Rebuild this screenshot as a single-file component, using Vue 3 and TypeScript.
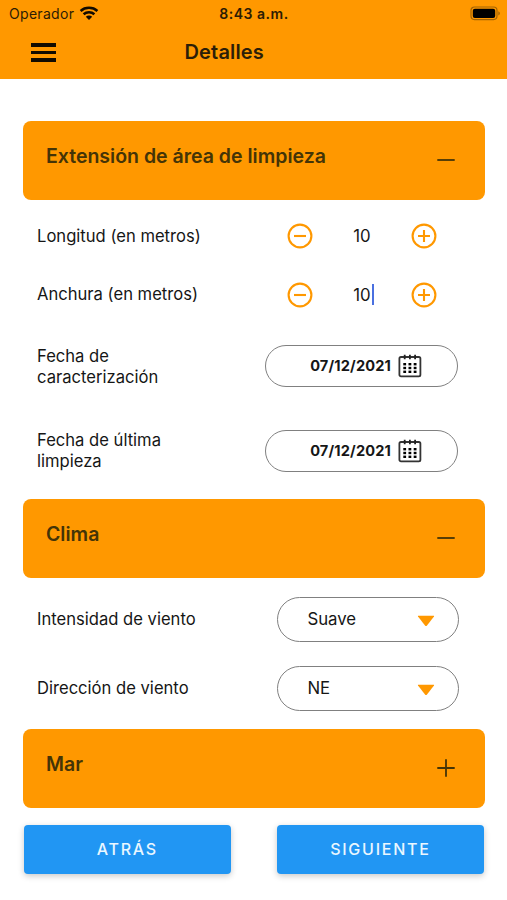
<script setup lang="ts">
import { ref } from 'vue'

interface Measure {
  label: string
  value: number
  focused: boolean
}

const measures = ref<Measure[]>([
  { label: 'Longitud (en metros)', value: 10, focused: false },
  { label: 'Anchura (en metros)', value: 10, focused: true },
])
const dates = [
  { label: 'Fecha de caracterización', value: '07/12/2021' },
  { label: 'Fecha de última limpieza', value: '07/12/2021' },
]
const winds = [
  { label: 'Intensidad de viento', value: 'Suave' },
  { label: 'Dirección de viento', value: 'NE' },
]
const dotColumns = [6.7, 11.9, 17.1]
const dotRows = [10.2, 14, 17.8]
</script>

<template>
  <div class="screen">
    <header class="top">
      <div class="status">
        <div class="carrier">
          <span class="operator">Operador</span>
          <svg class="wifi" width="20" height="15" viewBox="0 0 20 15">
            <path d="M1.6 5C6.2 0.8 13.8 0.8 18.4 5" />
            <path d="M4.6 8.3C7.7 5.5 12.3 5.5 15.4 8.3" />
            <path class="solid" d="M10 14 L6.8 10.7 C8.6 9.1 11.4 9.1 13.2 10.7 Z" />
          </svg>
        </div>
        <span class="clock">8:43 a.m.</span>
        <svg class="battery" width="31" height="15" viewBox="0 0 31 15">
          <rect class="shell" x="1" y="1" width="26" height="12.6" rx="3.5" />
          <rect x="2.8" y="2.7" width="22.4" height="9.2" rx="2" />
          <path class="cap" d="M28.3 5.2 C30.4 6 30.4 8.6 28.3 9.4Z" />
        </svg>
      </div>
      <div class="navbar">
        <button class="menu" aria-label="Menú"><i></i><i></i><i></i></button>
        <h1>Detalles</h1>
      </div>
    </header>

    <main>
      <section>
        <div class="panel">
          <h2>Extensión de área de limpieza</h2>
          <svg class="toggle" width="18" height="18" viewBox="0 0 18 18"><path d="M0.3 9H17.7" /></svg>
        </div>
        <div class="fields extent">
          <div v-for="m in measures" :key="m.label" class="row measure">
            <span class="label">{{ m.label }}</span>
            <div class="stepper">
              <button @click="m.value--">
                <svg width="26" height="26" viewBox="0 0 26 26"><circle cx="13" cy="13" r="11.4" /><path d="M7 13H19" /></svg>
              </button>
              <span class="amount">{{ m.value }}<i v-if="m.focused" class="caret"></i></span>
              <button @click="m.value++">
                <svg width="26" height="26" viewBox="0 0 26 26"><circle cx="13" cy="13" r="11.4" /><path d="M7 13H19M13 7V19" /></svg>
              </button>
            </div>
          </div>
          <div v-for="d in dates" :key="d.label" class="row date">
            <span class="label narrow">{{ d.label }}</span>
            <div class="pill date-pill">
              <span>{{ d.value }}</span>
              <svg width="24" height="24" viewBox="0 0 24 24">
                <rect class="frame" x="1.4" y="3" width="21" height="19.4" rx="1.6" />
                <path class="rings" d="M6.7 0.8V5.2M11.9 0.8V5.2M17.1 0.8V5.2" />
                <template v-for="y in dotRows" :key="y">
                  <rect v-for="x in dotColumns" :key="x" :x="x - 1.4" :y="y - 1.2" width="2.8" height="2.4" />
                </template>
              </svg>
            </div>
          </div>
        </div>
      </section>

      <section>
        <div class="panel">
          <h2>Clima</h2>
          <svg class="toggle" width="18" height="18" viewBox="0 0 18 18"><path d="M0.3 9H17.7" /></svg>
        </div>
        <div class="fields climate">
          <div v-for="w in winds" :key="w.label" class="row wind">
            <span class="label">{{ w.label }}</span>
            <div class="pill select">
              <span>{{ w.value }}</span>
              <svg width="18" height="12" viewBox="0 0 18 12"><path d="M1.2 0.8H16.8Q17.4 0.8 17 1.4L10 10.6Q9 11.6 8 10.6L1 1.4Q0.6 0.8 1.2 0.8Z" /></svg>
            </div>
          </div>
        </div>
      </section>

      <section>
        <div class="panel">
          <h2>Mar</h2>
          <svg class="toggle" width="18" height="18" viewBox="0 0 18 18"><path d="M0.3 9H17.7M9 0.3V17.7" /></svg>
        </div>
      </section>

      <footer>
        <button class="action">ATRÁS</button>
        <button class="action">SIGUIENTE</button>
      </footer>
    </main>
  </div>
</template>

<style>
body {
  margin: 0;
  background: #fff;
}
</style>

<style scoped>
.screen {
  width: 507px;
  height: 900px;
  overflow: hidden;
  background: #fff;
  color: #161616;
  font-family: Inter, 'Liberation Sans', sans-serif;
}
button {
  padding: 0;
  border: 0;
  background: none;
  font-family: inherit;
}
.top {
  height: 79px;
  background: #ff9800;
}
.status {
  display: grid;
  grid-template-columns: 1fr auto 1fr;
  align-items: center;
  height: 27px;
  padding: 0 6px 0 9px;
}
.carrier {
  display: flex;
  align-items: center;
  gap: 5px;
  font-size: 14px;
  color: #2c1c04;
}
.operator {
  letter-spacing: 0.3px;
}
.wifi {
  margin-top: -1px;
  fill: none;
  stroke: #120b00;
  stroke-width: 2.5;
}
.wifi .solid {
  fill: #120b00;
  stroke: none;
}
.clock {
  margin-right: 2px;
  font-size: 14px;
  font-weight: 600;
  letter-spacing: 0.5px;
  color: #2c1c04;
}
.battery {
  justify-self: end;
}
.shell {
  fill: none;
  stroke: #a36404;
  stroke-width: 1.2;
}
.cap {
  fill: #a36404;
}
.navbar {
  display: grid;
  grid-template-columns: 153.5px 1fr;
  align-items: center;
  height: 50px;
  padding-left: 31px;
}
.menu {
  display: flex;
  flex-direction: column;
  gap: 4px;
  width: 25px;
  margin-top: 1px;
}
.menu i {
  height: 3.6px;
  background: #120b00;
}
h1 {
  margin: 0;
  font-size: 20px;
  font-weight: 600;
  letter-spacing: 0.15px;
  color: #2c1e08;
}
main {
  padding: 42px 22px 0 23px;
}
.panel {
  display: flex;
  justify-content: space-between;
  height: 78.5px;
  padding: 0 30px 0 23px;
  box-sizing: border-box;
  border-radius: 8px;
  background: #ff9800;
}
h2 {
  margin: 22.5px 0 0;
  font-size: 19.5px;
  line-height: 24px;
  font-weight: 600;
  color: #443407;
}
.toggle {
  margin-top: 30px;
  fill: none;
  stroke: #443407;
  stroke-width: 1.8;
}
.fields {
  padding: 0 26px 0 14px;
}
.extent {
  padding-top: 7.5px;
  padding-bottom: 6px;
}
.climate {
  padding-top: 7px;
  padding-bottom: 6px;
}
.row {
  display: flex;
  align-items: center;
  justify-content: space-between;
}
.measure {
  height: 58.5px;
}
.date {
  height: 84.5px;
}
.wind {
  height: 69.3px;
}
.label {
  font-size: 16.6px;
  line-height: 21px;
}
.narrow {
  width: 140px;
  padding-top: 1px;
}
.stepper {
  display: grid;
  grid-template-columns: 26px 98px 26px;
  align-items: center;
  margin-right: 22px;
}
.stepper button {
  height: 26px;
}
.stepper svg {
  display: block;
  fill: none;
  stroke: #ff9800;
  stroke-width: 2.1;
}
.amount {
  position: relative;
  justify-self: center;
  font-size: 16.8px;
}
.caret {
  position: absolute;
  top: -1px;
  right: -3px;
  width: 2px;
  height: 21px;
  background: #4a70e0;
}
.pill {
  display: flex;
  align-items: center;
  box-sizing: border-box;
  border: 1px solid #808080;
}
.date-pill {
  justify-content: flex-end;
  gap: 7px;
  width: 193px;
  height: 42px;
  margin-right: 1px;
  padding-right: 35px;
  border-radius: 21px;
  font-size: 14.6px;
  font-weight: 700;
  letter-spacing: 0.15px;
}
.date-pill .frame {
  fill: none;
  stroke: #333;
  stroke-width: 1.8;
}
.rings {
  stroke: #222;
  stroke-width: 1.8;
}
.select {
  justify-content: space-between;
  width: 182px;
  height: 45px;
  padding: 0 23px 0 29px;
  margin-right: -0.4px;
  border-radius: 23px;
  font-size: 16.8px;
}
.select svg {
  fill: #ff9800;
  margin-top: 3px;
}
footer {
  display: flex;
  justify-content: space-between;
  padding: 17px 0.8px 0 0.5px;
}
.action {
  width: 207.6px;
  height: 49px;
  border-radius: 4px;
  background: #2196f3;
  box-shadow: 0 2px 6px rgba(0, 0, 0, 0.22);
  color: #eaf7ff;
  font-size: 16px;
  font-weight: 500;
  letter-spacing: 1.75px;
}
</style>
